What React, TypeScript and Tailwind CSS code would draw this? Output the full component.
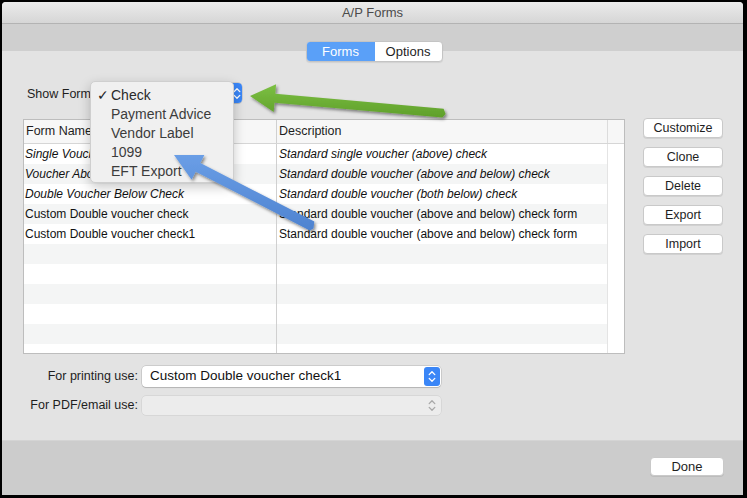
import React from "react";

const FONT = "font-['Liberation_Sans','Helvetica','Arial',sans-serif]";

function Chevrons({ color }: { color: string }) {
  return (
    <svg width="8" height="13" viewBox="0 0 8 13" fill="none">
      <path d="M1.2 4.6 L4 1.8 L6.8 4.6" stroke={color} strokeWidth="1.3" strokeLinecap="round" strokeLinejoin="round" />
      <path d="M1.2 8.4 L4 11.2 L6.8 8.4" stroke={color} strokeWidth="1.3" strokeLinecap="round" strokeLinejoin="round" />
    </svg>
  );
}

type Row = { name: string; desc: string; italic: boolean };

const rows: Row[] = [
  { name: "Single Voucher Above Check", desc: "Standard single voucher (above) check", italic: true },
  { name: "Voucher Above and Below Check", desc: "Standard double voucher (above and below) check", italic: true },
  { name: "Double Voucher Below Check", desc: "Standard double voucher (both below) check", italic: true },
  { name: "Custom Double voucher check", desc: "Standard double voucher (above and below) check form", italic: false },
  { name: "Custom Double voucher check1", desc: "Standard double voucher (above and below) check form", italic: false },
];

function MacButton({ label, className = "" }: { label: string; className?: string }) {
  return (
    <div
      className={`flex items-center justify-center bg-white rounded-[4px] border border-[#c9c9c9] shadow-[0_1px_0_rgba(0,0,0,0.08)] text-[12.5px] text-[#1e1e1e] ${className}`}
    >
      {label}
    </div>
  );
}

export default function App() {
  const emptyRows = Array.from({ length: 6 });
  return (
    <div className={`relative w-[747px] h-[498px] bg-black overflow-hidden ${FONT}`}>
      <div className="ml-[2px] mt-[2px] w-[741px] h-[493px] flex flex-col bg-[#e3e3e3] rounded-t-[4px] overflow-hidden">
        {/* Title bar */}
        <div className="h-[21px] shrink-0 flex items-center justify-center bg-gradient-to-b from-[#ebebeb] to-[#d6d6d6] text-[13px] text-[#4b4b4b]">
          A/P Forms
        </div>
        <div className="h-[1px] shrink-0 bg-[#b3b3b3]" />
        {/* Toolbar */}
        <div className="h-[27px] shrink-0 bg-[#cfcfcf]" />
        {/* Content */}
        <div className="h-[389px] shrink-0 flex flex-col bg-[#e3e3e3]">
          {/* Segmented control */}
          <div className="self-center -mt-[10px] ml-[3px] flex h-[21px] shrink-0 rounded-[4px] border border-[#c4c4c4] bg-white shadow-[0_1px_1px_rgba(0,0,0,0.08)] overflow-hidden text-[13px]">
            <div className="w-[68px] flex items-center justify-center bg-[#5aa0f8] text-white">Forms</div>
            <div className="w-[67px] flex items-center justify-center text-[#1e1e1e]">Options</div>
          </div>

          {/* Show Forms row */}
          <div className="mt-[21px] h-[20px] shrink-0 flex items-center pl-[25px]">
            <div className="w-[66px] pt-[3px] text-[12.5px] text-[#1e1e1e] whitespace-nowrap">Show Forms:</div>
            <div className="w-[149px] h-[20px] flex bg-white rounded-[4px] shadow-[0_0_0_0.5px_rgba(0,0,0,0.2),0_1px_1px_rgba(0,0,0,0.1)]">
              <div className="flex-1" />
              <div className="w-[11px] h-[20px] bg-[#3a86f7] rounded-r-[4px] flex items-center justify-center">
                <Chevrons color="#ffffff" />
              </div>
            </div>
          </div>

          {/* Table + buttons */}
          <div className="mt-[16px] shrink-0 flex pl-[21px]">
            <div className="w-[602px] h-[235px] border border-[#bdbdbd] bg-white flex flex-col overflow-hidden">
              {/* header */}
              <div className="h-[24px] shrink-0 flex border-b border-[#d6d6d6] bg-[#f7f7f7] text-[12.5px] text-[#1e1e1e]">
                <div className="w-[253px] flex items-center pl-[2px] border-r border-[#d0d0d0]">Form Name</div>
                <div className="w-[331px] flex items-center pl-[2px] border-r border-[#dcdcdc]">Description</div>
                <div className="flex-1" />
              </div>
              {rows.map((r, i) => (
                <div key={i} className="h-[20px] shrink-0 flex text-[12px] text-[#111]">
                  <div
                    className={`w-[584px] flex ${i % 2 === 1 ? "bg-[#f4f5f5]" : "bg-white"} ${r.italic ? "italic" : ""}`}
                  >
                    <div className="w-[253px] flex items-center pl-[1px] border-r border-[#d0d0d0] whitespace-nowrap overflow-hidden">
                      {r.name}
                    </div>
                    <div className="w-[331px] flex items-center pl-[2px] border-r border-[#e4e4e4] whitespace-nowrap overflow-hidden">
                      {r.desc}
                    </div>
                  </div>
                  <div className="flex-1 bg-white" />
                </div>
              ))}
              {emptyRows.map((_, j) => {
                const i = j + rows.length;
                return (
                  <div key={`e${j}`} className="h-[20px] flex shrink-0">
                    <div className={`w-[584px] flex ${i % 2 === 1 ? "bg-[#f4f5f5]" : "bg-white"}`}>
                      <div className="w-[253px] border-r border-[#d0d0d0]" />
                      <div className="w-[331px] border-r border-[#e4e4e4]" />
                    </div>
                    <div className="flex-1 bg-white" />
                  </div>
                );
              })}
            </div>
            <div className="ml-[18px] -mt-[1px] flex flex-col gap-[9px]">
              {["Customize", "Clone", "Delete", "Export", "Import"].map((b) => (
                <MacButton key={b} label={b} className="w-[80px] h-[20px]" />
              ))}
            </div>
          </div>

          {/* For printing use */}
          <div className="mt-[12px] h-[21px] shrink-0 flex items-center">
            <div className="w-[136px] text-right text-[12.5px] text-[#1e1e1e] whitespace-nowrap">For printing use:</div>
            <div className="ml-[4px] w-[299px] h-[21px] flex bg-white rounded-[4px] shadow-[0_0_0_0.5px_rgba(0,0,0,0.2),0_1px_1px_rgba(0,0,0,0.12)]">
              <div className="flex-1 flex items-center pl-[8px] text-[13.5px] text-[#111] whitespace-nowrap">
                Custom Double voucher check1
              </div>
              <div className="mr-[1px] my-[1px] w-[16px] bg-[#3a86f7] rounded-[3px] flex items-center justify-center">
                <Chevrons color="#ffffff" />
              </div>
            </div>
          </div>

          {/* For PDF/email use */}
          <div className="mt-[9px] h-[19px] shrink-0 flex items-center">
            <div className="w-[136px] text-right text-[12.5px] text-[#1e1e1e] whitespace-nowrap">For PDF/email use:</div>
            <div className="ml-[4px] w-[299px] h-[19px] flex bg-[#ececec] rounded-[4px] shadow-[0_0_0_0.5px_rgba(0,0,0,0.1)]">
              <div className="flex-1" />
              <div className="w-[18px] flex items-center justify-center">
                <Chevrons color="#a8a8a8" />
              </div>
            </div>
          </div>
        </div>

        {/* Footer */}
        <div className="h-[1px] shrink-0 bg-[#d4d4d4]" />
        <div className="flex-1 bg-[#cccccc] flex justify-end pt-[16px] pr-[19px]">
          <MacButton label="Done" className="w-[74px] h-[19px] text-[13px]" />
        </div>
      </div>

      {/* Popup menu overlay */}
      <div className="absolute left-[90px] top-[81px] w-[144px] h-[102px] rounded-[5px] bg-[#f0f0f0] border border-[#cfcfcf] shadow-[0_4px_12px_rgba(0,0,0,0.22)] pt-[4px] text-[14px] text-[#3c3c3c]">
        {["Check", "Payment Advice", "Vendor Label", "1099", "EFT Export"].map((m, i) => (
          <div key={m} className="h-[19px] flex items-center">
            <div className="w-[20px] pl-[6px] text-[14px] text-[#222]">{i === 0 ? "✓" : ""}</div>
            <div className={i === 0 ? "text-[#2a2a2a]" : ""}>{m}</div>
          </div>
        ))}
      </div>

      {/* Annotation arrows */}
      <svg className="absolute left-0 top-0 pointer-events-none" width="747" height="498" viewBox="0 0 747 498">
        <defs>
          <filter id="sh" x="-20%" y="-20%" width="140%" height="140%">
            <feDropShadow dx="1.5" dy="2" stdDeviation="1.6" floodColor="#000" floodOpacity="0.45" />
          </filter>
          <linearGradient id="gg" x1="0" y1="0" x2="0" y2="1">
            <stop offset="0" stopColor="#7cc043" />
            <stop offset="1" stopColor="#5f9f2a" />
          </linearGradient>
          <linearGradient id="bg" x1="0" y1="0" x2="0" y2="1">
            <stop offset="0" stopColor="#6a9ee6" />
            <stop offset="1" stopColor="#4e83d0" />
          </linearGradient>
        </defs>
        <polygon
          filter="url(#sh)"
          fill="url(#gg)"
          points="250,96 276.1,84.3 275.3,93.7 443.6,108.8 445.6,114 442.4,117.6 274.5,102.7 273.7,112.1"
        />
        <polygon
          filter="url(#sh)"
          fill="url(#bg)"
          points="174,155 204.4,154.9 200.3,162.9 314.3,221.6 313.5,228.5 309.7,230.4 195.7,171.7 191.6,179.7"
        />
      </svg>
    </div>
  );
}
